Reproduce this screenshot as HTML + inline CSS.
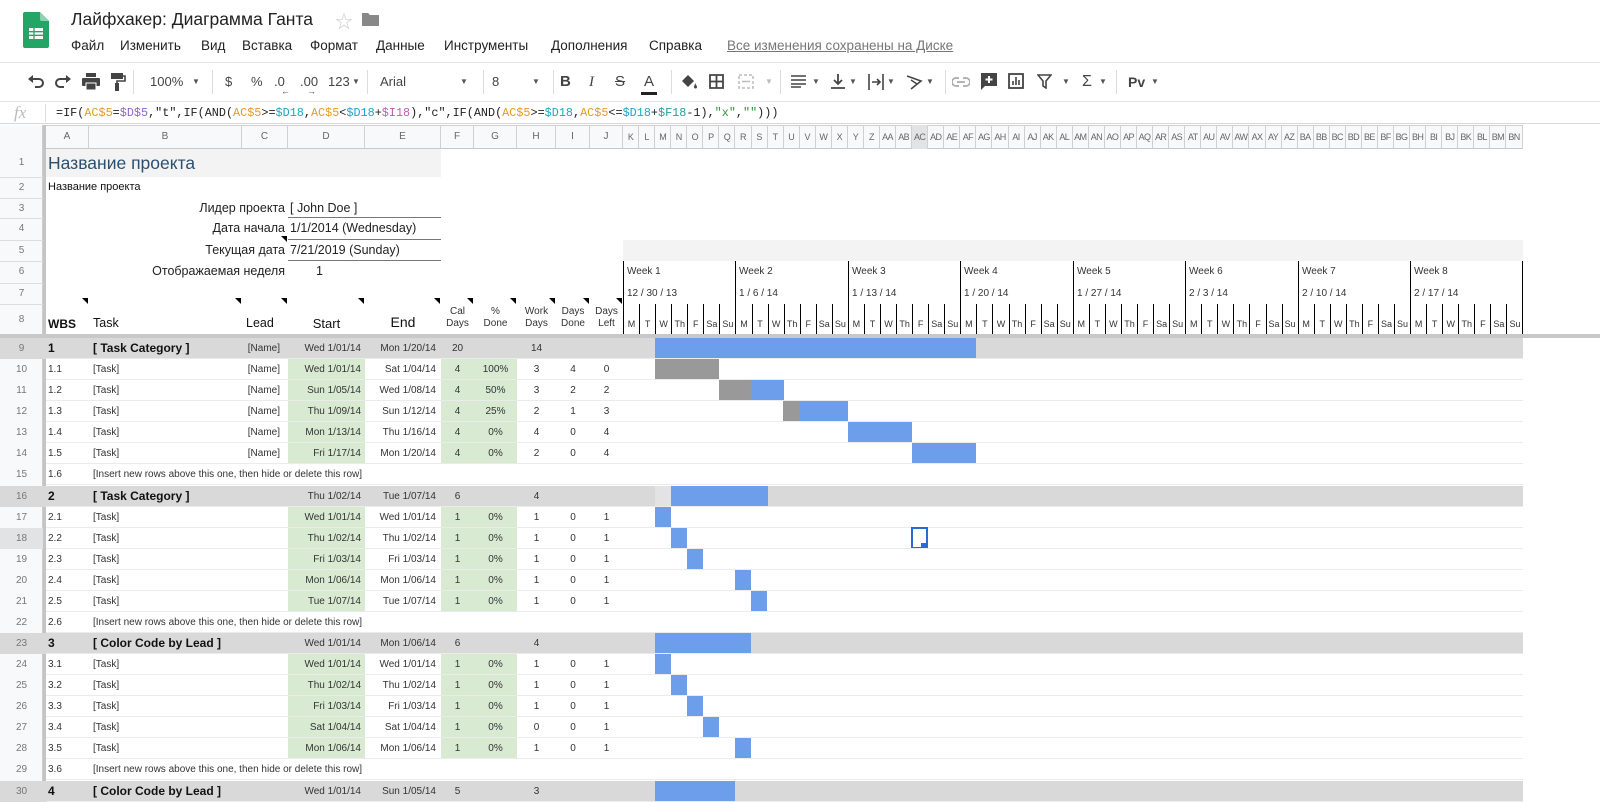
<!DOCTYPE html>
<html><head><meta charset="utf-8">
<style>
*{margin:0;padding:0}
body{width:1600px;height:800px;overflow:hidden;background:#fff;font-family:"Liberation Sans","Noto Sans CJK SC",sans-serif;position:relative;color:#222}
.ab{position:absolute;white-space:nowrap}
.menu span{position:absolute;top:38px;font-size:13.5px;color:#222}
.tb{position:absolute;top:72px;font-size:13px;color:#444;line-height:20px}
.sep{position:absolute;top:70px;width:1px;height:24px;background:#dadce0}
.dd{position:absolute;top:72px;font-size:8px;color:#555;line-height:20px}
.r{position:absolute;left:0;width:1600px;height:21.07px}
.r::after{content:"";position:absolute;left:46px;width:1477px;bottom:0;height:1px;background:#ebebeb}
.c{position:absolute;top:0;height:21px;line-height:21px;box-sizing:border-box;white-space:nowrap;font-size:10px;color:#333}
.n{position:absolute;left:0;width:43px;text-align:center;font-size:10px;color:#777;line-height:21px;top:0;height:21px}
.A{left:46px;width:43px;padding-left:2px}
.B{left:89px;width:153px;padding-left:4px}
.C{left:242px;width:46px;text-align:right;padding-right:8px}
.D{left:288px;width:77px;text-align:right;padding-right:4px}
.E{left:365px;width:76px;text-align:right;padding-right:5px}
.F{left:441px;width:33px;text-align:center}
.G{left:474px;width:43px;text-align:center}
.H{left:517px;width:39px;text-align:center}
.I{left:556px;width:34px;text-align:center}
.J{left:590px;width:33px;text-align:center}
.gD{position:absolute;left:288px;width:77px;top:0;height:21px;background:#d9ead3}
.gF{position:absolute;left:441px;width:76px;top:0;height:21px;background:#d9ead3}
.cat{background:#d9d9d9}
.cat .c{font-size:10px}
.cat .A,.cat .B{font-weight:bold;font-size:12px;color:#111}
.bl{position:absolute;top:0;height:20px;background:#6d9eeb}
.gr{position:absolute;top:0;height:20px;background:#999}
.colh{position:absolute;top:125px;height:24px;line-height:24px;font-size:10px;color:#666;text-align:center;border-right:1px solid #d0d0d0;box-sizing:border-box}
.days{position:absolute;left:623px;display:flex}
.days span{width:16.07px;box-sizing:border-box;text-align:center;flex:none;overflow:hidden}
</style></head><body>

<!-- header -->
<svg class="ab" style="left:23px;top:12px" width="26" height="36" viewBox="0 0 26 36"><path d="M2 0h15l9 9v25a2 2 0 0 1-2 2H2a2 2 0 0 1-2-2V2a2 2 0 0 1 2-2z" fill="#23a566"/><path d="M17 0l9 9h-7a2 2 0 0 1-2-2z" fill="#8ed1b1"/><rect x="6" y="16" width="14" height="11" fill="#fff"/><path d="M6 19.7h14M6 23.3h14M11 16v11" stroke="#23a566" stroke-width="1.3"/></svg>
<div class="ab" style="left:71px;top:9px;font-size:17.5px;color:#222">Лайфхакер: Диаграмма Ганта</div>
<div class="ab" style="left:335px;top:8px;font-size:18px;color:#ccc">☆</div>
<svg class="ab" style="left:362px;top:12px" width="17" height="14" viewBox="0 0 17 14"><path d="M0 1h6l2 2h9v11H0z" fill="#888"/></svg>
<div class="menu">
<span style="left:71px">Файл</span><span style="left:120px">Изменить</span><span style="left:201px">Вид</span><span style="left:242px">Вставка</span><span style="left:310px">Формат</span><span style="left:376px">Данные</span><span style="left:444px">Инструменты</span><span style="left:551px">Дополнения</span><span style="left:649px">Справка</span><span style="left:727px;color:#777;text-decoration:underline">Все изменения сохранены на Диске</span>
</div>
<div class="ab" style="left:0;top:62px;width:1600px;height:1px;background:#e2e2e2"></div>

<!-- toolbar -->
<svg class="ab" style="left:27px;top:74px" width="18" height="16" viewBox="0 0 18 16"><path d="M4 5h8a4 4 0 0 1 0 8H8" fill="none" stroke="#444" stroke-width="2"/><path d="M1 5l5-4v8z" fill="#444"/></svg>
<svg class="ab" style="left:54px;top:74px" width="18" height="16" viewBox="0 0 18 16"><path d="M14 5H6a4 4 0 0 0 0 8h4" fill="none" stroke="#444" stroke-width="2"/><path d="M17 5l-5-4v8z" fill="#444"/></svg>
<svg class="ab" style="left:82px;top:73px" width="18" height="17" viewBox="0 0 18 17"><rect x="4" y="0" width="10" height="4" fill="#444"/><rect x="0" y="5" width="18" height="8" rx="1" fill="#444"/><rect x="4" y="10" width="10" height="7" fill="#444" stroke="#fff" stroke-width="1"/></svg>
<svg class="ab" style="left:110px;top:73px" width="16" height="18" viewBox="0 0 16 18"><rect x="1" y="0" width="12" height="6" fill="#444"/><path d="M13 3h2v5H7v3" fill="none" stroke="#444" stroke-width="1.6"/><rect x="5" y="10" width="4" height="8" fill="#444"/></svg>
<div class="sep" style="left:133px"></div>
<div class="tb" style="left:150px">100%</div><div class="dd" style="left:192px">▼</div>
<div class="sep" style="left:212px"></div>
<div class="tb" style="left:225px">$</div>
<div class="tb" style="left:251px">%</div>
<div class="tb" style="left:274px">.0<span style="position:absolute;left:7px;top:9px;font-size:9px">←</span></div>
<div class="tb" style="left:300px">.00<span style="position:absolute;left:7px;top:9px;font-size:9px">→</span></div>
<div class="tb" style="left:328px">123</div><div class="dd" style="left:352px">▼</div>
<div class="sep" style="left:367px"></div>
<div class="tb" style="left:380px">Arial</div><div class="dd" style="left:460px">▼</div>
<div class="sep" style="left:483px"></div>
<div class="tb" style="left:492px">8</div><div class="dd" style="left:532px">▼</div>
<div class="sep" style="left:553px"></div>
<div class="tb" style="left:560px;font-weight:bold;font-size:15px">B</div>
<div class="tb" style="left:589px;font-style:italic;font-size:15px;font-family:'Liberation Serif',serif">I</div>
<div class="tb" style="left:615px;font-size:15px;text-decoration:line-through">S</div>
<div class="tb" style="left:644px;font-size:15px">A</div><div class="ab" style="left:641px;top:92px;width:16px;height:3px;background:#222"></div>
<div class="sep" style="left:671px"></div>
<svg class="ab" style="left:680px;top:74px" width="18" height="16" viewBox="0 0 18 16"><path d="M2 7l6-6 6 6-6 6z" fill="#444"/><path d="M15 9c1 2 2 3 2 4a1.5 1.5 0 0 1-3 0c0-1 1-2 1-4z" fill="#444"/></svg>
<svg class="ab" style="left:709px;top:74px" width="15" height="15" viewBox="0 0 15 15"><path d="M1 1h13v13H1zM7.5 1v13M1 7.5h13" fill="none" stroke="#444" stroke-width="1.8"/></svg>
<svg class="ab" style="left:738px;top:74px" width="16" height="15" viewBox="0 0 16 15"><path d="M1 1h14v13H1z" fill="none" stroke="#bbb" stroke-width="1.5" stroke-dasharray="3 2"/><path d="M4 7.5h8" stroke="#bbb" stroke-width="1.5"/></svg><div class="dd" style="left:765px;color:#bbb">▼</div>
<div class="sep" style="left:780px"></div>
<svg class="ab" style="left:791px;top:75px" width="15" height="13" viewBox="0 0 15 13"><path d="M0 1h15M0 5h15M0 9h15M0 12h10" stroke="#444" stroke-width="1.6"/></svg><div class="dd" style="left:812px">▼</div>
<svg class="ab" style="left:831px;top:74px" width="14" height="16" viewBox="0 0 14 16"><path d="M7 0v9M3 6l4 4 4-4M0 14h14" fill="none" stroke="#444" stroke-width="1.8"/></svg><div class="dd" style="left:849px">▼</div>
<svg class="ab" style="left:868px;top:74px" width="16" height="16" viewBox="0 0 16 16"><path d="M1 0v16M15 0v16M4 8h7M9 5l3 3-3 3" fill="none" stroke="#444" stroke-width="1.6"/></svg><div class="dd" style="left:887px">▼</div>
<svg class="ab" style="left:906px;top:74px" width="17" height="16" viewBox="0 0 17 16"><path d="M1 2l14 5-10 8" fill="none" stroke="#444" stroke-width="1.6"/><path d="M5 6l6 4" stroke="#444" stroke-width="1.4"/></svg><div class="dd" style="left:926px">▼</div>
<div class="sep" style="left:945px"></div>
<svg class="ab" style="left:952px;top:77px" width="18" height="10" viewBox="0 0 18 10"><path d="M7 1H4a4 4 0 0 0 0 8h3M11 1h3a4 4 0 0 1 0 8h-3M5 5h8" fill="none" stroke="#aaa" stroke-width="1.7"/></svg>
<svg class="ab" style="left:981px;top:73px" width="16" height="17" viewBox="0 0 16 17"><path d="M0 0h16v13H4l-4 4z" fill="#444"/><path d="M8 3v7M4.5 6.5h7" stroke="#fff" stroke-width="2"/></svg>
<svg class="ab" style="left:1008px;top:73px" width="16" height="16" viewBox="0 0 16 16"><rect x="1" y="1" width="14" height="14" fill="none" stroke="#444" stroke-width="1.8"/><path d="M5 12V8M8 12V4M11 12V7" stroke="#444" stroke-width="1.6"/></svg>
<svg class="ab" style="left:1037px;top:74px" width="15" height="15" viewBox="0 0 15 15"><path d="M1 1h13l-5 6v7l-3-2V7z" fill="none" stroke="#444" stroke-width="1.6"/></svg><div class="dd" style="left:1062px">▼</div>
<div class="tb" style="left:1082px;font-size:16px">Σ</div><div class="dd" style="left:1099px">▼</div>
<div class="sep" style="left:1116px"></div>
<div class="tb" style="left:1128px;font-weight:bold;font-size:14px">Pv</div><div class="dd" style="left:1151px">▼</div>
<div class="ab" style="left:0;top:101px;width:1600px;height:1px;background:#e2e2e2"></div>

<!-- formula bar -->
<div class="ab" style="left:14px;top:102px;font-family:'Liberation Serif',serif;font-style:italic;font-size:17px;color:#bbb;line-height:22px">fx</div>
<div class="ab" style="left:45px;top:104px;width:1px;height:18px;background:#ddd"></div>
<div class="ab" style="left:56px;top:104px;font-family:'Liberation Mono',monospace;font-size:11.8px;line-height:18px;color:#222">=IF(<span style="color:#e69a28">AC$5</span>=<span style="color:#8e63ce">$D$5</span>,"t",IF(AND(<span style="color:#e69a28">AC$5</span>&gt;=<span style="color:#1ea5c8">$D18</span>,<span style="color:#e69a28">AC$5</span>&lt;<span style="color:#1ea5c8">$D18</span>+<span style="color:#c05ab8">$I18</span>),"c",IF(AND(<span style="color:#e69a28">AC$5</span>&gt;=<span style="color:#1ea5c8">$D18</span>,<span style="color:#e69a28">AC$5</span>&lt;=<span style="color:#1ea5c8">$D18</span>+<span style="color:#1aa39a">$F18</span>-1),<span style="color:#2a9a3a">"x"</span>,<span style="color:#2a9a3a">""</span>)))</div>
<div class="ab" style="left:0;top:123px;width:1600px;height:1px;background:#d8d8d8"></div>

<!-- row header column -->
<div class="ab" style="left:0;top:125px;width:43px;height:675px;background:#f8f9fa;border-right:1px solid #ccc;box-sizing:border-box"></div>
<div class="ab" style="left:43px;top:125px;width:3px;height:675px;background:#c4c4c4"></div>
<!-- column header -->
<div class="ab" style="left:46px;top:125px;width:1477px;height:24px;background:#f8f9fa;border-top:1px solid #d0d0d0;border-bottom:1px solid #c8c8c8;box-sizing:border-box"></div>
<div class="colh" style="left:46px;width:43px">A</div><div class="colh" style="left:89px;width:153px">B</div><div class="colh" style="left:242px;width:46px">C</div><div class="colh" style="left:288px;width:77px">D</div><div class="colh" style="left:365px;width:76px">E</div><div class="colh" style="left:441px;width:33px">F</div><div class="colh" style="left:474px;width:43px">G</div><div class="colh" style="left:517px;width:39px">H</div><div class="colh" style="left:556px;width:34px">I</div><div class="colh" style="left:590px;width:33px">J</div>
<div class="days" style="top:125px;height:24px;line-height:24px;font-size:9px;color:#666;letter-spacing:-0.6px">
<span style="border-right:1px solid #d0d0d0">K</span><span style="border-right:1px solid #d0d0d0">L</span><span style="border-right:1px solid #d0d0d0">M</span><span style="border-right:1px solid #d0d0d0">N</span><span style="border-right:1px solid #d0d0d0">O</span><span style="border-right:1px solid #d0d0d0">P</span><span style="border-right:1px solid #d0d0d0">Q</span><span style="border-right:1px solid #d0d0d0">R</span><span style="border-right:1px solid #d0d0d0">S</span><span style="border-right:1px solid #d0d0d0">T</span><span style="border-right:1px solid #d0d0d0">U</span><span style="border-right:1px solid #d0d0d0">V</span><span style="border-right:1px solid #d0d0d0">W</span><span style="border-right:1px solid #d0d0d0">X</span><span style="border-right:1px solid #d0d0d0">Y</span><span style="border-right:1px solid #d0d0d0">Z</span><span style="border-right:1px solid #d0d0d0">AA</span><span style="border-right:1px solid #d0d0d0">AB</span><span style="border-right:1px solid #d0d0d0;background:#e2e3e5">AC</span><span style="border-right:1px solid #d0d0d0">AD</span><span style="border-right:1px solid #d0d0d0">AE</span><span style="border-right:1px solid #d0d0d0">AF</span><span style="border-right:1px solid #d0d0d0">AG</span><span style="border-right:1px solid #d0d0d0">AH</span><span style="border-right:1px solid #d0d0d0">AI</span><span style="border-right:1px solid #d0d0d0">AJ</span><span style="border-right:1px solid #d0d0d0">AK</span><span style="border-right:1px solid #d0d0d0">AL</span><span style="border-right:1px solid #d0d0d0">AM</span><span style="border-right:1px solid #d0d0d0">AN</span><span style="border-right:1px solid #d0d0d0">AO</span><span style="border-right:1px solid #d0d0d0">AP</span><span style="border-right:1px solid #d0d0d0">AQ</span><span style="border-right:1px solid #d0d0d0">AR</span><span style="border-right:1px solid #d0d0d0">AS</span><span style="border-right:1px solid #d0d0d0">AT</span><span style="border-right:1px solid #d0d0d0">AU</span><span style="border-right:1px solid #d0d0d0">AV</span><span style="border-right:1px solid #d0d0d0">AW</span><span style="border-right:1px solid #d0d0d0">AX</span><span style="border-right:1px solid #d0d0d0">AY</span><span style="border-right:1px solid #d0d0d0">AZ</span><span style="border-right:1px solid #d0d0d0">BA</span><span style="border-right:1px solid #d0d0d0">BB</span><span style="border-right:1px solid #d0d0d0">BC</span><span style="border-right:1px solid #d0d0d0">BD</span><span style="border-right:1px solid #d0d0d0">BE</span><span style="border-right:1px solid #d0d0d0">BF</span><span style="border-right:1px solid #d0d0d0">BG</span><span style="border-right:1px solid #d0d0d0">BH</span><span style="border-right:1px solid #d0d0d0">BI</span><span style="border-right:1px solid #d0d0d0">BJ</span><span style="border-right:1px solid #d0d0d0">BK</span><span style="border-right:1px solid #d0d0d0">BL</span><span style="border-right:1px solid #d0d0d0">BM</span><span style="border-right:1px solid #d0d0d0">BN</span>
</div>

<!-- header rows 1-8 -->
<div class="ab" style="left:46px;top:149px;width:395px;height:28px;background:#f3f3f3"></div>
<div class="ab" style="left:48px;top:149px;font-size:17.5px;line-height:28px;color:#2b4f6e">Название проекта</div>
<div class="ab" style="left:48px;top:177px;font-size:11px;line-height:21px;color:#111">Название проекта</div>
<div class="ab" style="left:100px;width:185px;text-align:right;top:198px;font-size:12.5px;line-height:20px;color:#222">Лидер проекта</div>
<div class="ab" style="left:290px;top:198px;font-size:12.5px;line-height:20px;color:#222">[ John Doe ]</div>
<div class="ab" style="left:288px;top:217px;width:153px;height:1px;background:#777"></div>
<div class="ab" style="left:100px;width:185px;text-align:right;top:218px;font-size:12.5px;line-height:21px;color:#222">Дата начала</div>
<div class="ab" style="left:290px;top:218px;font-size:12.5px;line-height:21px;color:#222">1/1/2014 (Wednesday)</div>
<div class="ab" style="left:288px;top:239px;width:153px;height:1px;background:#777"></div>
<div class="ab" style="left:100px;width:185px;text-align:right;top:240px;font-size:12.5px;line-height:21px;color:#222">Текущая дата</div>
<div class="ab" style="left:290px;top:240px;font-size:12.5px;line-height:21px;color:#222">7/21/2019 (Sunday)</div>
<div class="ab" style="left:288px;top:260px;width:153px;height:1px;background:#777"></div>
<div class="ab" style="left:100px;width:185px;text-align:right;top:261px;font-size:12.5px;line-height:21px;color:#222">Отображаемая неделя</div>
<div class="ab" style="left:316px;top:261px;font-size:12.5px;line-height:21px;color:#222">1</div>
<div class="ab" style="left:623px;top:240px;width:900px;height:21px;background:#f3f3f3"></div>
<!-- row header numbers 1-8 -->
<div class="n ab" style="top:149px;height:28px;line-height:28px">1</div>
<div class="n ab" style="top:177px">2</div><div class="n ab" style="top:198px">3</div><div class="n ab" style="top:218px">4</div><div class="n ab" style="top:240px">5</div><div class="n ab" style="top:261px">6</div><div class="n ab" style="top:283px">7</div><div class="n ab" style="top:304px;height:31px;line-height:31px">8</div>
<div class="ab" style="left:0;top:177px;width:43px;height:1px;background:#ddd"></div><div class="ab" style="left:0;top:198px;width:43px;height:1px;background:#ddd"></div><div class="ab" style="left:0;top:218px;width:43px;height:1px;background:#ddd"></div><div class="ab" style="left:0;top:240px;width:43px;height:1px;background:#ddd"></div><div class="ab" style="left:0;top:261px;width:43px;height:1px;background:#ddd"></div><div class="ab" style="left:0;top:283px;width:43px;height:1px;background:#ddd"></div><div class="ab" style="left:0;top:304px;width:43px;height:1px;background:#ddd"></div>

<!-- week headers -->
<div class="ab" style="left:623px;top:261px;width:1px;height:74px;background:#000"></div><div class="ab" style="left:735px;top:261px;width:1px;height:74px;background:#000"></div><div class="ab" style="left:848px;top:261px;width:1px;height:74px;background:#000"></div><div class="ab" style="left:960px;top:261px;width:1px;height:74px;background:#000"></div><div class="ab" style="left:1073px;top:261px;width:1px;height:74px;background:#000"></div><div class="ab" style="left:1185px;top:261px;width:1px;height:74px;background:#000"></div><div class="ab" style="left:1298px;top:261px;width:1px;height:74px;background:#000"></div><div class="ab" style="left:1410px;top:261px;width:1px;height:74px;background:#000"></div><div class="ab" style="left:1522px;top:261px;width:1px;height:74px;background:#000"></div>
<div style="position:absolute;top:261px;font-size:10px;line-height:21px;color:#333">
<span class="ab" style="left:627px">Week 1</span><span class="ab" style="left:739px">Week 2</span><span class="ab" style="left:852px">Week 3</span><span class="ab" style="left:964px">Week 4</span><span class="ab" style="left:1077px">Week 5</span><span class="ab" style="left:1189px">Week 6</span><span class="ab" style="left:1302px">Week 7</span><span class="ab" style="left:1414px">Week 8</span></div>
<div style="position:absolute;top:283px;font-size:10px;line-height:21px;color:#333">
<span class="ab" style="left:627px">12 / 30 / 13</span><span class="ab" style="left:739px">1 / 6 / 14</span><span class="ab" style="left:852px">1 / 13 / 14</span><span class="ab" style="left:964px">1 / 20 / 14</span><span class="ab" style="left:1077px">1 / 27 / 14</span><span class="ab" style="left:1189px">2 / 3 / 14</span><span class="ab" style="left:1302px">2 / 10 / 14</span><span class="ab" style="left:1414px">2 / 17 / 14</span></div>
<div class="days" style="top:304px;height:31px;line-height:14px;font-size:9px;color:#333;padding-top:0">
<span style="border-left:1px solid #000;padding-top:13px">M</span><span style="border-left:1px solid #000;padding-top:13px">T</span><span style="border-left:1px solid #000;padding-top:13px">W</span><span style="border-left:1px solid #000;padding-top:13px">Th</span><span style="border-left:1px solid #000;padding-top:13px">F</span><span style="border-left:1px solid #000;padding-top:13px">Sa</span><span style="border-left:1px solid #000;padding-top:13px">Su</span>
<span style="border-left:1px solid #000;padding-top:13px">M</span><span style="border-left:1px solid #000;padding-top:13px">T</span><span style="border-left:1px solid #000;padding-top:13px">W</span><span style="border-left:1px solid #000;padding-top:13px">Th</span><span style="border-left:1px solid #000;padding-top:13px">F</span><span style="border-left:1px solid #000;padding-top:13px">Sa</span><span style="border-left:1px solid #000;padding-top:13px">Su</span>
<span style="border-left:1px solid #000;padding-top:13px">M</span><span style="border-left:1px solid #000;padding-top:13px">T</span><span style="border-left:1px solid #000;padding-top:13px">W</span><span style="border-left:1px solid #000;padding-top:13px">Th</span><span style="border-left:1px solid #000;padding-top:13px">F</span><span style="border-left:1px solid #000;padding-top:13px">Sa</span><span style="border-left:1px solid #000;padding-top:13px">Su</span>
<span style="border-left:1px solid #000;padding-top:13px">M</span><span style="border-left:1px solid #000;padding-top:13px">T</span><span style="border-left:1px solid #000;padding-top:13px">W</span><span style="border-left:1px solid #000;padding-top:13px">Th</span><span style="border-left:1px solid #000;padding-top:13px">F</span><span style="border-left:1px solid #000;padding-top:13px">Sa</span><span style="border-left:1px solid #000;padding-top:13px">Su</span>
<span style="border-left:1px solid #000;padding-top:13px">M</span><span style="border-left:1px solid #000;padding-top:13px">T</span><span style="border-left:1px solid #000;padding-top:13px">W</span><span style="border-left:1px solid #000;padding-top:13px">Th</span><span style="border-left:1px solid #000;padding-top:13px">F</span><span style="border-left:1px solid #000;padding-top:13px">Sa</span><span style="border-left:1px solid #000;padding-top:13px">Su</span>
<span style="border-left:1px solid #000;padding-top:13px">M</span><span style="border-left:1px solid #000;padding-top:13px">T</span><span style="border-left:1px solid #000;padding-top:13px">W</span><span style="border-left:1px solid #000;padding-top:13px">Th</span><span style="border-left:1px solid #000;padding-top:13px">F</span><span style="border-left:1px solid #000;padding-top:13px">Sa</span><span style="border-left:1px solid #000;padding-top:13px">Su</span>
<span style="border-left:1px solid #000;padding-top:13px">M</span><span style="border-left:1px solid #000;padding-top:13px">T</span><span style="border-left:1px solid #000;padding-top:13px">W</span><span style="border-left:1px solid #000;padding-top:13px">Th</span><span style="border-left:1px solid #000;padding-top:13px">F</span><span style="border-left:1px solid #000;padding-top:13px">Sa</span><span style="border-left:1px solid #000;padding-top:13px">Su</span>
<span style="border-left:1px solid #000;padding-top:13px">M</span><span style="border-left:1px solid #000;padding-top:13px">T</span><span style="border-left:1px solid #000;padding-top:13px">W</span><span style="border-left:1px solid #000;padding-top:13px">Th</span><span style="border-left:1px solid #000;padding-top:13px">F</span><span style="border-left:1px solid #000;padding-top:13px">Sa</span><span style="border-left:1px solid #000;padding-top:13px">Su</span>
</div>

<!-- row 8 headers -->
<div class="ab" style="left:48px;top:317px;font-size:12px;font-weight:bold;color:#111">WBS</div>
<div class="ab" style="left:93px;top:316px;font-size:12.5px;color:#111">Task</div>
<div class="ab" style="left:246px;top:316px;font-size:12.5px;color:#111">Lead</div>
<div class="ab" style="left:288px;width:77px;text-align:center;top:316px;font-size:13px;color:#111">Start</div>
<div class="ab" style="left:365px;width:76px;text-align:center;top:314px;font-size:14px;color:#111">End</div>
<div class="ab" style="left:441px;width:33px;text-align:center;top:306px;font-size:10px;line-height:12px;color:#333">Cal<br>Days</div>
<div class="ab" style="left:474px;width:43px;text-align:center;top:306px;font-size:10px;line-height:12px;color:#333">%<br>Done</div>
<div class="ab" style="left:517px;width:39px;text-align:center;top:306px;font-size:10px;line-height:12px;color:#333">Work<br>Days</div>
<div class="ab" style="left:556px;width:34px;text-align:center;top:306px;font-size:10px;line-height:12px;color:#333">Days<br>Done</div>
<div class="ab" style="left:590px;width:33px;text-align:center;top:306px;font-size:10px;line-height:12px;color:#333">Days<br>Left</div>
<div class="ab" style="left:82px;top:298px;width:0;height:0;border-left:6px solid transparent;border-top:6px solid #000"></div>
<div class="ab" style="left:235px;top:298px;width:0;height:0;border-left:6px solid transparent;border-top:6px solid #000"></div>
<div class="ab" style="left:281px;top:298px;width:0;height:0;border-left:6px solid transparent;border-top:6px solid #000"></div>
<div class="ab" style="left:358px;top:298px;width:0;height:0;border-left:6px solid transparent;border-top:6px solid #000"></div>
<div class="ab" style="left:434px;top:298px;width:0;height:0;border-left:6px solid transparent;border-top:6px solid #000"></div>
<div class="ab" style="left:467px;top:298px;width:0;height:0;border-left:6px solid transparent;border-top:6px solid #000"></div>
<div class="ab" style="left:510px;top:298px;width:0;height:0;border-left:6px solid transparent;border-top:6px solid #000"></div>
<div class="ab" style="left:549px;top:298px;width:0;height:0;border-left:6px solid transparent;border-top:6px solid #000"></div>
<div class="ab" style="left:583px;top:298px;width:0;height:0;border-left:6px solid transparent;border-top:6px solid #000"></div>
<div class="ab" style="left:616px;top:298px;width:0;height:0;border-left:6px solid transparent;border-top:6px solid #000"></div>
<div class="ab" style="left:281px;top:236px;width:0;height:0;border-left:6px solid transparent;border-top:6px solid #000"></div>
<!-- frozen separator -->
<div class="ab" style="left:0;top:334px;width:1600px;height:4px;background:#c8c8c8"></div>

<!-- body rows -->
<div class="r cat" style="top:338px;width:1523px"><div class="n">9</div><div class="c A">1</div><div class="c B">[ Task Category ]</div><div class="c C">[Name]</div><div class="c D">Wed 1/01/14</div><div class="c E">Mon 1/20/14</div><div class="c F">20</div><div class="c H">14</div><div class="bl" style="left:655px;width:321px"></div></div>
<div class="r" style="top:359.1px"><div class="n">10</div><div class="gD"></div><div class="gF"></div><div class="c A">1.1</div><div class="c B">[Task]</div><div class="c C">[Name]</div><div class="c D">Wed 1/01/14</div><div class="c E">Sat 1/04/14</div><div class="c F">4</div><div class="c G">100%</div><div class="c H">3</div><div class="c I">4</div><div class="c J">0</div><div class="gr" style="left:655px;width:64px"></div></div>
<div class="r" style="top:380.1px"><div class="n">11</div><div class="gD"></div><div class="gF"></div><div class="c A">1.2</div><div class="c B">[Task]</div><div class="c C">[Name]</div><div class="c D">Sun 1/05/14</div><div class="c E">Wed 1/08/14</div><div class="c F">4</div><div class="c G">50%</div><div class="c H">3</div><div class="c I">2</div><div class="c J">2</div><div class="gr" style="left:719px;width:33px"></div><div class="bl" style="left:751px;width:33px"></div></div>
<div class="r" style="top:401.2px"><div class="n">12</div><div class="gD"></div><div class="gF"></div><div class="c A">1.3</div><div class="c B">[Task]</div><div class="c C">[Name]</div><div class="c D">Thu 1/09/14</div><div class="c E">Sun 1/12/14</div><div class="c F">4</div><div class="c G">25%</div><div class="c H">2</div><div class="c I">1</div><div class="c J">3</div><div class="gr" style="left:783px;width:17px"></div><div class="bl" style="left:800px;width:48px"></div></div>
<div class="r" style="top:422.3px"><div class="n">13</div><div class="gD"></div><div class="gF"></div><div class="c A">1.4</div><div class="c B">[Task]</div><div class="c C">[Name]</div><div class="c D">Mon 1/13/14</div><div class="c E">Thu 1/16/14</div><div class="c F">4</div><div class="c G">0%</div><div class="c H">4</div><div class="c I">0</div><div class="c J">4</div><div class="bl" style="left:848px;width:64px"></div></div>
<div class="r" style="top:443.4px"><div class="n">14</div><div class="gD"></div><div class="gF"></div><div class="c A">1.5</div><div class="c B">[Task]</div><div class="c C">[Name]</div><div class="c D">Fri 1/17/14</div><div class="c E">Mon 1/20/14</div><div class="c F">4</div><div class="c G">0%</div><div class="c H">2</div><div class="c I">0</div><div class="c J">4</div><div class="bl" style="left:912px;width:64px"></div></div>
<div class="r" style="top:464.4px"><div class="n">15</div><div class="c A">1.6</div><div class="c B">[Insert new rows above this one, then hide or delete this row]</div></div>
<div class="r cat" style="top:485.5px;width:1523px"><div class="n">16</div><div class="c A">2</div><div class="c B">[ Task Category ]</div><div class="c D">Thu 1/02/14</div><div class="c E">Tue 1/07/14</div><div class="c F">6</div><div class="c H">4</div><div style="position:absolute;top:0;height:20px;left:655px;width:16px;background:#e3e3e3"></div><div class="bl" style="left:671px;width:97px"></div></div>
<div class="r" style="top:506.6px"><div class="n">17</div><div class="gD"></div><div class="gF"></div><div class="c A">2.1</div><div class="c B">[Task]</div><div class="c D">Wed 1/01/14</div><div class="c E">Wed 1/01/14</div><div class="c F">1</div><div class="c G">0%</div><div class="c H">1</div><div class="c I">0</div><div class="c J">1</div><div class="bl" style="left:655px;width:16px"></div></div>
<div class="r" style="top:527.6px"><div class="n" style="background:#e2e3e5">18</div><div class="gD"></div><div class="gF"></div><div class="c A">2.2</div><div class="c B">[Task]</div><div class="c D">Thu 1/02/14</div><div class="c E">Thu 1/02/14</div><div class="c F">1</div><div class="c G">0%</div><div class="c H">1</div><div class="c I">0</div><div class="c J">1</div><div class="bl" style="left:671px;width:16px"></div><div style="position:absolute;left:911px;top:-1px;width:13px;height:18px;border:2px solid #2a6bd1"></div><div style="position:absolute;left:921px;top:15px;width:5px;height:5px;background:#2a6bd1"></div></div>
<div class="r" style="top:548.7px"><div class="n">19</div><div class="gD"></div><div class="gF"></div><div class="c A">2.3</div><div class="c B">[Task]</div><div class="c D">Fri 1/03/14</div><div class="c E">Fri 1/03/14</div><div class="c F">1</div><div class="c G">0%</div><div class="c H">1</div><div class="c I">0</div><div class="c J">1</div><div class="bl" style="left:687px;width:16px"></div></div>
<div class="r" style="top:569.8px"><div class="n">20</div><div class="gD"></div><div class="gF"></div><div class="c A">2.4</div><div class="c B">[Task]</div><div class="c D">Mon 1/06/14</div><div class="c E">Mon 1/06/14</div><div class="c F">1</div><div class="c G">0%</div><div class="c H">1</div><div class="c I">0</div><div class="c J">1</div><div class="bl" style="left:735px;width:16px"></div></div>
<div class="r" style="top:590.8px"><div class="n">21</div><div class="gD"></div><div class="gF"></div><div class="c A">2.5</div><div class="c B">[Task]</div><div class="c D">Tue 1/07/14</div><div class="c E">Tue 1/07/14</div><div class="c F">1</div><div class="c G">0%</div><div class="c H">1</div><div class="c I">0</div><div class="c J">1</div><div class="bl" style="left:751px;width:16px"></div></div>
<div class="r" style="top:611.9px"><div class="n">22</div><div class="c A">2.6</div><div class="c B">[Insert new rows above this one, then hide or delete this row]</div></div>
<div class="r cat" style="top:633px;width:1523px"><div class="n">23</div><div class="c A">3</div><div class="c B">[ Color Code by Lead ]</div><div class="c D">Wed 1/01/14</div><div class="c E">Mon 1/06/14</div><div class="c F">6</div><div class="c H">4</div><div class="bl" style="left:655px;width:96px"></div></div>
<div class="r" style="top:654.1px"><div class="n">24</div><div class="gD"></div><div class="gF"></div><div class="c A">3.1</div><div class="c B">[Task]</div><div class="c D">Wed 1/01/14</div><div class="c E">Wed 1/01/14</div><div class="c F">1</div><div class="c G">0%</div><div class="c H">1</div><div class="c I">0</div><div class="c J">1</div><div class="bl" style="left:655px;width:16px"></div></div>
<div class="r" style="top:675.1px"><div class="n">25</div><div class="gD"></div><div class="gF"></div><div class="c A">3.2</div><div class="c B">[Task]</div><div class="c D">Thu 1/02/14</div><div class="c E">Thu 1/02/14</div><div class="c F">1</div><div class="c G">0%</div><div class="c H">1</div><div class="c I">0</div><div class="c J">1</div><div class="bl" style="left:671px;width:16px"></div></div>
<div class="r" style="top:696.2px"><div class="n">26</div><div class="gD"></div><div class="gF"></div><div class="c A">3.3</div><div class="c B">[Task]</div><div class="c D">Fri 1/03/14</div><div class="c E">Fri 1/03/14</div><div class="c F">1</div><div class="c G">0%</div><div class="c H">1</div><div class="c I">0</div><div class="c J">1</div><div class="bl" style="left:687px;width:16px"></div></div>
<div class="r" style="top:717.3px"><div class="n">27</div><div class="gD"></div><div class="gF"></div><div class="c A">3.4</div><div class="c B">[Task]</div><div class="c D">Sat 1/04/14</div><div class="c E">Sat 1/04/14</div><div class="c F">1</div><div class="c G">0%</div><div class="c H">0</div><div class="c I">0</div><div class="c J">1</div><div class="bl" style="left:703px;width:16px"></div></div>
<div class="r" style="top:738.3px"><div class="n">28</div><div class="gD"></div><div class="gF"></div><div class="c A">3.5</div><div class="c B">[Task]</div><div class="c D">Mon 1/06/14</div><div class="c E">Mon 1/06/14</div><div class="c F">1</div><div class="c G">0%</div><div class="c H">1</div><div class="c I">0</div><div class="c J">1</div><div class="bl" style="left:735px;width:16px"></div></div>
<div class="r" style="top:759.4px"><div class="n">29</div><div class="c A">3.6</div><div class="c B">[Insert new rows above this one, then hide or delete this row]</div></div>
<div class="r cat" style="top:780.5px;width:1523px"><div class="n">30</div><div class="c A">4</div><div class="c B">[ Color Code by Lead ]</div><div class="c D">Wed 1/01/14</div><div class="c E">Sun 1/05/14</div><div class="c F">5</div><div class="c H">3</div><div class="bl" style="left:655px;width:80px"></div></div>
</body></html>
